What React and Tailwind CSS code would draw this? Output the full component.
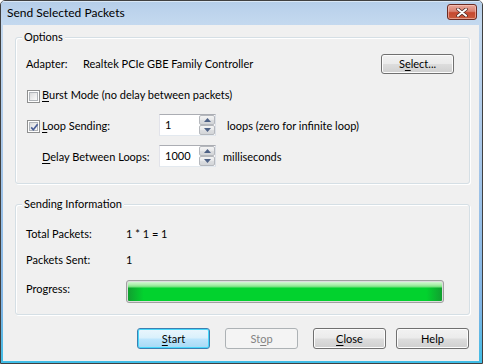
import React from "react";

const btnBase =
  "h-[21px] w-[73px] rounded-[3px] border flex items-center justify-center text-[11px] leading-[16px]";
const btnNormal =
  "border-[#707070] text-black bg-[linear-gradient(to_bottom,#f2f2f2_0%,#ebebeb_48%,#dddddd_52%,#cfcfcf_100%)] shadow-[inset_0_0_0_1px_#fcfcfc]";
const btnDefault =
  "border-[#3c7fb1] text-black bg-[linear-gradient(to_bottom,#eaf6fd_0%,#d9f0fc_48%,#bee6fd_52%,#a7d9f5_100%)] shadow-[inset_0_0_0_1px_#48d8fb]";
const btnDisabled = "border-[#adb2b5] text-[#838383] bg-[#f4f4f4]";

function U({ children }) {
  return <span className="underline underline-offset-[2px] decoration-[1px]">{children}</span>;
}

function CheckBox({ checked }) {
  return (
    <div className="w-[13px] h-[13px] border border-[#8e8f8f] bg-white p-[1px] shrink-0">
      <div className="w-full h-full border border-[#b1b5ba] bg-[linear-gradient(135deg,#d9dadb_0%,#eeeeee_55%,#fbfbfb_100%)] relative">
        {checked && (
          <svg width="11" height="11" viewBox="0 0 11 11" className="absolute left-[-1px] top-[-1px]">
            <path d="M2.2 5.4 L4.3 7.8 L8.6 2.2" fill="none" stroke="#4a5f97" strokeWidth="1.7" strokeLinejoin="round" />
          </svg>
        )}
      </div>
    </div>
  );
}

function SpinHalf({ up }) {
  return (
    <div className="h-[10px] w-[16px] rounded-[2px] border border-[#b5b8bd] bg-[linear-gradient(to_bottom,#f4f4f4_0%,#e7e8ea_50%,#dcdee1_51%,#d3d5d8_100%)] flex items-center justify-center">
      <svg width="7" height="4" viewBox="0 0 7 4">
        {up ? <path d="M0 4 L3.5 0 L7 4 Z" fill="#4d6185" /> : <path d="M0 0 L3.5 4 L7 0 Z" fill="#4d6185" />}
      </svg>
    </div>
  );
}

function Spinner({ value }) {
  return (
    <div className="w-[57px] h-[22px] border border-[#abadb3] border-l-[#e2e3ea] border-b-[#e3e9ef] border-r-[#dbdfe6] bg-white flex shrink-0">
      <div className="flex-1 pl-[5px] flex items-center leading-[16px]">{value}</div>
      <div className="flex flex-col justify-between">
        <SpinHalf up />
        <SpinHalf />
      </div>
    </div>
  );
}

function Group({ label, className, children }) {
  return (
    <div className={"relative border border-[#d5dfe5] rounded-[3px] shadow-[inset_1px_1px_0_#ffffff,1px_1px_0_#ffffff] " + className}>
      <div className="absolute left-[6px] -top-[9px] px-[2px] bg-[#f0f0f0] leading-[16px] whitespace-nowrap">{label}</div>
      {children}
    </div>
  );
}

export default function App() {
  return (
    <div
      className="w-[483px] h-[364px] flex flex-col border border-[#404040] rounded-t-[5px] overflow-hidden bg-[linear-gradient(to_bottom,#bad2ea_0px,#c3d8ee_24px,#a9c7e8_40%,#7fb4e4_85%,#3fbde6_100%)] text-black"
      style={{ fontFamily: "Lato, 'Liberation Sans', sans-serif" }}
    >
      {/* Title bar */}
      <div className="h-[24px] shrink-0 flex items-start bg-[linear-gradient(to_bottom,#b4cde8_0%,#bcd3ec_40%,#c4d9ef_100%)] shadow-[inset_0_1px_0_#d9e7f5]">
        <div className="pl-[6px] pt-[4px] text-[12px] leading-[16px] text-[#000]">Send Selected Packets</div>
        <div className="ml-auto mr-[5px] mt-[3px] w-[30px] h-[16px] rounded-[3px] border border-[#6b2b22] bg-[linear-gradient(to_bottom,#e8a799_0%,#d98170_45%,#c6482f_55%,#c85a3c_100%)] shadow-[inset_0_0_0_1px_rgba(255,210,200,0.55)] flex items-center justify-center">
          <svg width="12" height="9" viewBox="0 0 12 9">
            <path d="M2 1.2 L10 7.8 M10 1.2 L2 7.8" stroke="#4a2a26" strokeWidth="3.4" strokeLinecap="round" />
            <path d="M2 1.2 L10 7.8 M10 1.2 L2 7.8" stroke="#ffffff" strokeWidth="2" strokeLinecap="round" />
          </svg>
        </div>
      </div>

      {/* Client */}
      <div className="flex-1 ml-[2px] mr-[3px] mb-[2px] bg-[#f0f0f0] flex flex-col pl-[12px] pr-[9px] pt-[12px] text-[11px]">
        <Group label="Options" className="h-[147px] shrink-0 pl-[10px] pr-[15px] flex flex-col">
          <div className="mt-[16px] h-[20px] flex items-center">
            <div className="w-[57px] leading-[16px]">Adapter:</div>
            <div className="leading-[16px] whitespace-nowrap">Realtek PCIe GBE Family Controller</div>
            <button className={"ml-auto h-[20px] w-[73px] rounded-[3px] border flex items-center justify-center leading-[16px] " + btnNormal}>
              S<U>e</U>lect...
            </button>
          </div>

          <div className="mt-[13px] h-[16px] flex items-start">
            <div className="ml-[1px] mt-[3px]"><CheckBox /></div>
            <div className="ml-[2px] leading-[16px] whitespace-nowrap"><U>B</U>urst Mode (no delay between packets)</div>
          </div>

          <div className="mt-[11px] h-[22px] flex items-start">
            <div className="ml-[1px] mt-[6px]"><CheckBox checked /></div>
            <div className="ml-[2px] mt-[4px] w-[117px] shrink-0 leading-[16px] whitespace-nowrap"><U>L</U>oop Sending:</div>
            <Spinner value="1" />
            <div className="ml-[11px] mt-[4px] leading-[16px] whitespace-nowrap">loops (zero for infinite loop)</div>
          </div>

          <div className="mt-[9px] h-[22px] flex items-start">
            <div className="ml-[16px] mt-[4px] w-[117px] shrink-0 leading-[16px] whitespace-nowrap"><U>D</U>elay Between Loops:</div>
            <Spinner value="1000" />
            <div className="ml-[7px] mt-[4px] leading-[16px] whitespace-nowrap">milliseconds</div>
          </div>
        </Group>

        <Group label="Sending Information" className="mt-[20px] h-[111px] shrink-0 pl-[10px] flex flex-col">
          <div className="mt-[21px] h-[16px] flex leading-[16px]">
            <div className="w-[100px]">Total Packets:</div>
            <div>1 * 1 = 1</div>
          </div>
          <div className="mt-[10px] h-[16px] flex leading-[16px]">
            <div className="w-[100px]">Packets Sent:</div>
            <div>1</div>
          </div>
          <div className="mt-[12px] h-[23px] flex items-start">
            <div className="w-[100px] mt-[1px] leading-[16px]">Progress:</div>
            <div className="w-[318px] h-[23px] rounded-[3px] border border-[#a0a0a0] bg-[#dcdcdc] p-[1px]">
              <div className="w-full h-full rounded-[1px] bg-[linear-gradient(to_bottom,#d2f7d2_0px,#a8eea8_3px,#6fe07a_5px,rgba(0,0,0,0)_6px),linear-gradient(to_right,#119f30_0%,#02d22e_5%,#02d22e_95%,#119f30_100%)]"></div>
            </div>
          </div>
        </Group>

        <div className="mt-[13px] flex justify-end pr-[1px]">
          <button className={btnBase + " " + btnDefault}><U>S</U>tart</button>
          <button className={btnBase + " ml-[15px] " + btnDisabled}>St<U>o</U>p</button>
          <button className={btnBase + " ml-[15px] " + btnNormal}><U>C</U>lose</button>
          <button className={btnBase + " ml-[10px] " + btnNormal}>Help</button>
        </div>
      </div>
    </div>
  );
}
